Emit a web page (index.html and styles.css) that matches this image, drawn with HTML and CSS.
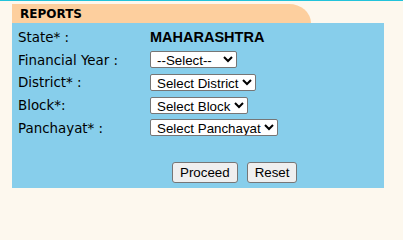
FILE: index.html
```html
<!DOCTYPE html>
<html>
<head>
<meta charset="utf-8">
<link rel="stylesheet" href="styles.css">
</head>
<body>
<div class="topline"></div>
<div class="wrap">
  <div class="tab">REPORTS</div>
  <div class="panel">
    <div class="form">
      <div class="label">State* :</div>
      <div class="value state">MAHARASHTRA</div>
      <div class="label">Financial Year :</div>
      <div class="value"><select class="sel"><option>--Select--&nbsp;&nbsp;</option></select></div>
      <div class="label">District* :</div>
      <div class="value"><select class="sel"><option>Select District</option></select></div>
      <div class="label">Block*:</div>
      <div class="value"><select class="sel"><option>Select Block</option></select></div>
      <div class="label">Panchayat* :</div>
      <div class="value"><select class="sel"><option>Select Panchayat</option></select></div>
    </div>
    <div class="actions">
      <button class="btn">Proceed</button>
      <button class="btn">Reset</button>
    </div>
  </div>
</div>
</body>
</html>
```
FILE: styles.css
```css
html, body {
  margin: 0;
  padding: 0;
  background: #fdf8ee;
}
body {
  width: 403px;
  height: 206px;
  overflow: hidden;
}
.topline {
  height: 1px;
  background: #22c3da;
}
.wrap {
  padding: 3px 0 0 12px;
  width: 372px;
}
.tab {
  width: 291px;
  height: 19px;
  padding-left: 8px;
  background: #fdcf9e;
  border-top-right-radius: 22px 19px;
  font-family: Verdana, "DejaVu Sans", sans-serif;
  font-weight: bold;
  font-size: 12px;
  line-height: 20px;
  color: #000;
}
.panel {
  background: #87ceeb;
  height: 165px;
  padding: 3px 0 0 6px;
  box-sizing: border-box;
  display: flex;
  flex-direction: column;
}
.form {
  display: grid;
  grid-template-columns: 132px auto;
  grid-auto-rows: 22.75px;
  align-items: center;
}
.label {
  font-family: Verdana, "DejaVu Sans", sans-serif;
  font-size: 13.4px;
  color: #000;
}
.state {
  font-family: Arial, "Liberation Sans", sans-serif;
  font-weight: bold;
  font-size: 14.5px;
}
.sel {
  font-family: Arial, "Liberation Sans", sans-serif;
  font-size: 13.33px;
  height: 17px;
  padding: 0 0 0 2px;
  margin: 0;
  background: #fff;
  color: #000;
  border: 1px solid #767676;
  border-radius: 2px;
}
.actions {
  margin-top: 22px;
  padding-left: 154px;
  display: flex;
  gap: 9px;
}
.btn {
  font-family: Arial, "Liberation Sans", sans-serif;
  font-size: 13.33px;
  height: 21px;
  padding: 1px 7px;
  margin: 0;
  background: #efefef;
  color: #000;
  border: 1px solid #767676;
  border-radius: 3px;
}
```
